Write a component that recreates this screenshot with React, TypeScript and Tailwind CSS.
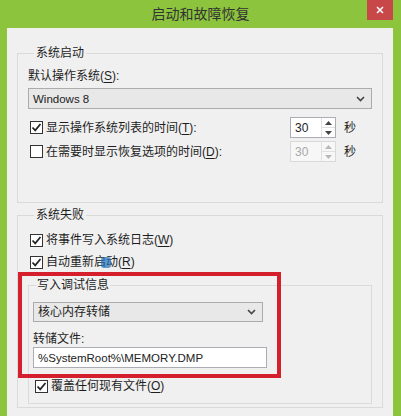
import React from "react";

const font = {
  fontFamily: '"Liberation Sans", "Noto Sans CJK SC", sans-serif',
};

function Check({ checked }: { checked: boolean }) {
  return (
    <span className="flex h-[13px] w-[13px] shrink-0 items-center justify-center border border-[#333333] bg-white">
      {checked && (
        <svg width="11" height="11" viewBox="0 0 11 11">
          <path d="M1.5 5.5 L4.2 8.4 L9.5 2" fill="none" stroke="#222222" strokeWidth="1.7" />
        </svg>
      )}
    </span>
  );
}

function Chevron() {
  return (
    <svg width="9" height="6" viewBox="0 0 9 6">
      <path d="M1 1 L4.5 4.5 L8 1" fill="none" stroke="#444444" strokeWidth="1.6" />
    </svg>
  );
}

function Combo({ value, className }: { value: string; className: string }) {
  return (
    <div
      className={
        "flex items-center justify-between border border-[#acacac] bg-[#e8e8e8] pl-[4px] pr-[6px] text-[#222222] " +
        className
      }
    >
      <span>{value}</span>
      <Chevron />
    </div>
  );
}

function Spin({ disabled }: { disabled?: boolean }) {
  return (
    <div
      className={
        "flex h-[21px] w-[46px] border " +
        (disabled ? "border-[#d9d9d9] bg-[#f7f7f7] text-[#a8a8a8]" : "border-[#abadb3] bg-white text-[#222222]")
      }
    >
      <span className="flex flex-1 items-center pl-[4px] text-[12px]">30</span>
      <div className="flex w-[14px] flex-col border-l border-[#e0e0e0]">
        <span className="flex flex-1 items-center justify-center border-b border-[#e0e0e0]">
          <svg width="7" height="4" viewBox="0 0 7 4">
            <path d="M0 4 L3.5 0 L7 4 Z" fill={disabled ? "#b8b8b8" : "#444444"} />
          </svg>
        </span>
        <span className="flex flex-1 items-center justify-center">
          <svg width="7" height="4" viewBox="0 0 7 4">
            <path d="M0 0 L3.5 4 L7 0 Z" fill={disabled ? "#b8b8b8" : "#444444"} />
          </svg>
        </span>
      </div>
    </div>
  );
}

function CheckRow({ checked, label }: { checked: boolean; label: React.ReactNode }) {
  return (
    <div className="flex h-[16px] items-center gap-[3px] pl-[2px]">
      <Check checked={checked} />
      <span>{label}</span>
    </div>
  );
}

function Key({ k }: { k: string }) {
  return <span className="underline underline-offset-2">{k}</span>;
}

export default function App() {
  return (
    <div
      className="flex h-[416px] w-[401px] flex-col overflow-hidden bg-[#8cc43e] text-[12px] leading-[16px] text-[#1e1e1e]"
      style={font}
    >
      <div className="grid h-[28px] shrink-0 grid-cols-[1fr_auto_1fr]">
        <div />
        <div className="flex items-center text-[14px] text-[#333333]">启动和故障恢复</div>
        <div className="flex justify-end pr-[8px]">
          <div className="flex h-[20px] w-[26px] items-center justify-center bg-[#c8484a]">
            <svg width="8" height="8" viewBox="0 0 8 8">
              <path d="M1 1 L7 7 M7 1 L1 7" stroke="#ffffff" strokeWidth="1.5" />
            </svg>
          </div>
        </div>
      </div>

      <div className="relative ml-[7px] mr-[8px] flex-1 bg-[#f0f0f0] px-[10px] pt-[17px]">
        <fieldset className="border border-[#dadada] px-[10px] pb-[40px]">
          <legend className="ml-[6px] px-[2px]">系统启动</legend>
          <div className="mt-[7px]">
            默认操作系统(<Key k="S" />):
          </div>
          <Combo value="Windows 8" className="mt-[4px] h-[21px] text-[11.5px]" />
          <div className="mt-[8px] flex flex-col gap-[3px]">
            <div className="flex h-[21px] items-center">
              <CheckRow
                checked
                label={
                  <>
                    显示操作系统列表的时间(<Key k="T" />):
                  </>
                }
              />
              <div className="ml-auto">
                <Spin />
              </div>
              <span className="w-[36px] pl-[8px]">秒</span>
            </div>
            <div className="flex h-[21px] items-center">
              <CheckRow
                checked={false}
                label={
                  <>
                    在需要时显示恢复选项的时间(<Key k="D" />):
                  </>
                }
              />
              <div className="ml-auto">
                <Spin disabled />
              </div>
              <span className="w-[36px] pl-[8px]">秒</span>
            </div>
          </div>
        </fieldset>

        <fieldset className="mt-[4px] border border-[#dadada] pl-[10px] pr-[10px] pb-[3px]">
          <legend className="ml-[6px] px-[2px]">系统失败</legend>
          <div className="mt-[9px] flex flex-col gap-[6px]">
            <CheckRow
              checked
              label={
                <>
                  将事件写入系统日志(<Key k="W" />)
                </>
              }
            />
            <CheckRow
              checked
              label={
                <>
                  自动重新启动(<Key k="R" />)
                </>
              }
            />
          </div>
          <fieldset className="mt-[7px] border border-[#dadada] pl-[4px] pb-[9px]">
            <legend className="ml-[3px] px-[1px]">写入调试信息</legend>
            <Combo value="核心内存转储" className="mt-[9px] h-[20px] w-[230px]" />
            <div className="mt-[9px]">转储文件:</div>
            <div className="flex h-[21px] w-[234px] items-center border border-[#abadb3] bg-white pl-[4px] text-[11.5px] text-[#222222]">
              %SystemRoot%\MEMORY.DMP
            </div>
            <div className="mt-[10px]">
              <CheckRow
                checked
                label={
                  <>
                    覆盖任何现有文件(<Key k="O" />)
                  </>
                }
              />
            </div>
          </fieldset>
        </fieldset>

        <div className="pointer-events-none absolute left-[11px] top-[244px] h-[106px] w-[263px] border-4 border-[#d61f2c]" />
        <div className="pointer-events-none absolute left-[94px] top-[229px] h-[11px] w-[10px] rounded-[3px] bg-[#1f6fb8] opacity-70" />
      </div>
    </div>
  );
}
